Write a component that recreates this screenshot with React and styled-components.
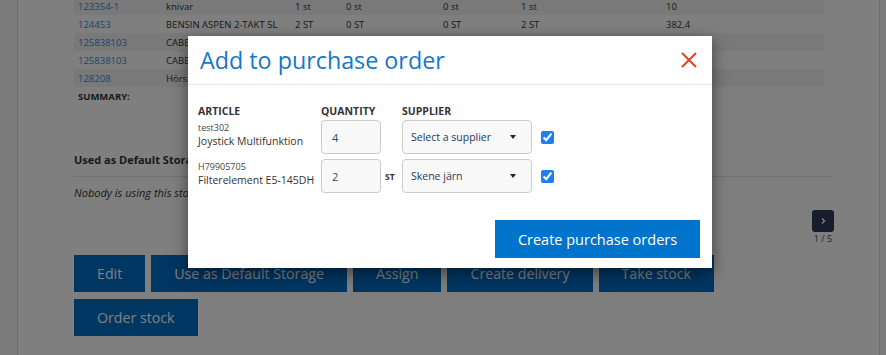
import React from 'react';
import styled, { createGlobalStyle } from 'styled-components';

const GlobalStyle = createGlobalStyle`
  html, body {
    margin: 0;
    padding: 0;
  }
  body {
    font-family: "Open Sans", "Liberation Sans", sans-serif;
    background: #f6f6f6;
    color: #333;
  }
`;

const Page = styled.div`
  width: 886px;
  height: 355px;
  position: relative;
  overflow: hidden;
  display: flex;
  background: #f6f6f6;
`;

const SideStrip = styled.div`
  width: 17px;
  flex-shrink: 0;
  border-right: 1px solid #d6d6d6;
`;

const Main = styled.main`
  width: 862px;
  flex-shrink: 0;
  background: #fff;
  border-right: 1px solid #d6d6d6;
  padding: 0 45px 0 56px;
  box-sizing: border-box;
  margin-top: -3px;
  display: flex;
  flex-direction: column;
`;

const TABLE_COLS = '88px 129px 51px 97px 78px 145px 1fr';

const Table = styled.div`
  width: 750px;
  display: flex;
  flex-direction: column;
`;

const Row = styled.div`
  display: grid;
  grid-template-columns: ${TABLE_COLS};
  height: 18px;
  align-items: center;
  padding-left: 4px;
  background: ${p => (p.$striped ? '#f2f2f2' : 'transparent')};
  font-size: 9.5px;
  color: #333;
  white-space: nowrap;
`;

const ArticleLink = styled.a`
  color: #3a8ad6;
  text-decoration: none;
`;

const SummaryLabel = styled.span`
  font-weight: 700;
  text-transform: uppercase;
`;

const SectionTitle = styled.h4`
  margin: 47px 0 0;
  font-size: 11px;
  line-height: 15px;
  font-weight: 700;
  color: #333;
`;

const Divider = styled.hr`
  margin: 9px 0 0;
  border: 0;
  border-top: 1px solid #e4e4e4;
`;

const EmptyNote = styled.p`
  margin: 8px 0 0;
  font-size: 11px;
  line-height: 15px;
  font-style: italic;
  color: #333;
`;

const Pager = styled.div`
  align-self: flex-end;
  margin-top: 10px;
  display: flex;
  flex-direction: column;
  align-items: center;
  width: 22px;
`;

const PagerButton = styled.button`
  width: 22px;
  height: 22px;
  border: 0;
  border-radius: 3px;
  background: #2a3d54;
  color: #fff;
  padding: 0;
  display: flex;
  align-items: center;
  justify-content: center;
`;

const PagerText = styled.span`
  font-size: 9px;
  line-height: 14px;
  color: #444;
  white-space: nowrap;
`;

const ActionBar = styled.div`
  margin-top: 9px;
  display: flex;
  flex-wrap: wrap;
  gap: 7px 6px;
`;

const ActionButton = styled.button`
  height: 37px;
  padding: 0 23px;
  border: 0;
  background: #006cc4;
  color: #fff;
  font-family: "Open Sans", sans-serif;
  font-size: 14.2px;
  white-space: nowrap;
`;

const Overlay = styled.div`
  position: absolute;
  inset: 0;
  z-index: 10;
  background: rgba(0, 0, 0, 0.5);
  padding: 36px 0 0 188px;
`;

const Modal = styled.div`
  width: 524px;
  background: #fff;
  box-shadow: 0 5px 15px rgba(0, 0, 0, 0.5);
`;

const ModalHeader = styled.div`
  height: 49px;
  box-sizing: border-box;
  padding: 0 15px 0 12px;
  display: flex;
  align-items: center;
  justify-content: space-between;
  border-bottom: 1px solid #e8e8e8;
`;

const ModalTitle = styled.h2`
  margin: 0;
  font-size: 23.3px;
  font-weight: 400;
  line-height: 28px;
  color: #1477cc;
`;

const CloseButton = styled.button`
  border: 0;
  background: none;
  padding: 0;
  width: 16px;
  height: 16px;
  display: flex;
`;

const ModalBody = styled.div`
  padding: 19px 10px 0;
  display: flex;
  flex-direction: column;
`;

const ORDER_COLS = '123px 60px 21px 130px auto';

const HeadRow = styled.div`
  display: grid;
  grid-template-columns: ${ORDER_COLS};
  height: 14px;
  margin-bottom: 2px;
`;

const ColLabel = styled.span`
  font-size: 10.5px;
  line-height: 14px;
  font-weight: 700;
  text-transform: uppercase;
  color: #333;
  grid-column: ${p => p.$col};
`;

const OrderRow = styled.div`
  display: grid;
  grid-template-columns: ${ORDER_COLS};
  align-items: center;
  margin-bottom: 5px;
`;

const Article = styled.div`
  align-self: start;
  padding-top: 2px;
  display: flex;
  flex-direction: column;
  white-space: nowrap;
`;

const ArticleCode = styled.span`
  font-size: 9px;
  line-height: 12px;
  color: #444;
`;

const ArticleName = styled.span`
  font-size: 10.5px;
  line-height: 15px;
  color: #333;
`;

const QtyInput = styled.input`
  width: 60px;
  height: 34px;
  box-sizing: border-box;
  border: 1px solid #cbcbcb;
  border-radius: 4px;
  background: #f9f9f9;
  padding: 0 10px;
  font-family: "Open Sans", sans-serif;
  font-size: 11px;
  color: #1f4d7a;
`;

const Unit = styled.span`
  padding-left: 4px;
  font-size: 8.5px;
  font-weight: 700;
  color: #333;
`;

const SupplierSelect = styled.div`
  width: 130px;
  height: 34px;
  box-sizing: border-box;
  border: 1px solid #cbcbcb;
  border-radius: 4px;
  background: #f9f9f9;
  padding: 0 15px 0 8px;
  display: flex;
  align-items: center;
  justify-content: space-between;
  font-size: 10.5px;
  color: #1d3b5e;
  white-space: nowrap;
`;

const Caret = styled.span`
  width: 0;
  height: 0;
  border-left: 3.5px solid transparent;
  border-right: 3.5px solid transparent;
  border-top: 4px solid #222;
`;

const Check = styled.input`
  margin: 0 0 0 9px;
  width: 13px;
  height: 13px;
  accent-color: #1a7ff2;
`;

const ModalFooter = styled.div`
  display: flex;
  justify-content: flex-end;
  padding: 22px 12px 10px;
`;

const PrimaryButton = styled.button`
  width: 205px;
  height: 38px;
  border: 0;
  background: #0074cc;
  color: #fff;
  font-family: "Open Sans", sans-serif;
  font-size: 14.5px;
`;

const rows = [
  ['123354-1', 'knivar', '1 st', '0 st', '0 st', '1 st', '10'],
  ['124453', 'BENSIN ASPEN 2-TAKT 5L', '2 ST', '0 ST', '0 ST', '2 ST', '382,4'],
  ['125838103', 'CABEL', '', '', '', '', ''],
  ['125838103', 'CABEL', '', '', '', '', ''],
  ['128208', 'Hörsel', '', '', '', '', ''],
];

const orders = [
  { code: 'test302', name: 'Joystick Multifunktion', qty: '4', unit: '', supplier: 'Select a supplier' },
  { code: 'H79905705', name: 'Filterelement E5-145DH', qty: '2', unit: 'ST', supplier: 'Skene järn' },
];

const actions = ['Edit', 'Use as Default Storage', 'Assign', 'Create delivery', 'Take stock', 'Order stock'];

export default function App() {
  return (
    <>
      <GlobalStyle />
      <Page>
        <SideStrip />
        <Main>
          <Table>
            {rows.map((r, i) => (
              <Row key={i} $striped={i % 2 === 0}>
                <ArticleLink href="#">{r[0]}</ArticleLink>
                {r.slice(1).map((c, j) => (
                  <span key={j}>{c}</span>
                ))}
              </Row>
            ))}
            <Row>
              <SummaryLabel>Summary:</SummaryLabel>
            </Row>
          </Table>

          <SectionTitle>Used as Default Storage</SectionTitle>
          <Divider />
          <EmptyNote>Nobody is using this storage</EmptyNote>

          <Pager>
            <PagerButton>
              <svg width="8" height="8" viewBox="0 0 8 8">
                <path d="M3 1.5 L5.5 4 L3 6.5" fill="none" stroke="#fff" strokeWidth="1.4" />
              </svg>
            </PagerButton>
            <PagerText>1 / 5</PagerText>
          </Pager>

          <ActionBar>
            {actions.map(a => (
              <ActionButton key={a}>{a}</ActionButton>
            ))}
          </ActionBar>
        </Main>

        <Overlay>
          <Modal>
            <ModalHeader>
              <ModalTitle>Add to purchase order</ModalTitle>
              <CloseButton aria-label="Close">
                <svg width="16" height="16" viewBox="0 0 16 16">
                  <path d="M1 1 L15 15 M15 1 L1 15" stroke="#e5431f" strokeWidth="2" />
                </svg>
              </CloseButton>
            </ModalHeader>
            <ModalBody>
              <HeadRow>
                <ColLabel $col="1">Article</ColLabel>
                <ColLabel $col="2 / span 2">Quantity</ColLabel>
                <ColLabel $col="4">Supplier</ColLabel>
              </HeadRow>
              {orders.map(o => (
                <OrderRow key={o.code}>
                  <Article>
                    <ArticleCode>{o.code}</ArticleCode>
                    <ArticleName>{o.name}</ArticleName>
                  </Article>
                  <QtyInput defaultValue={o.qty} />
                  <Unit>{o.unit}</Unit>
                  <SupplierSelect>
                    <span>{o.supplier}</span>
                    <Caret />
                  </SupplierSelect>
                  <Check type="checkbox" defaultChecked />
                </OrderRow>
              ))}
            </ModalBody>
            <ModalFooter>
              <PrimaryButton>Create purchase orders</PrimaryButton>
            </ModalFooter>
          </Modal>
        </Overlay>
      </Page>
    </>
  );
}
